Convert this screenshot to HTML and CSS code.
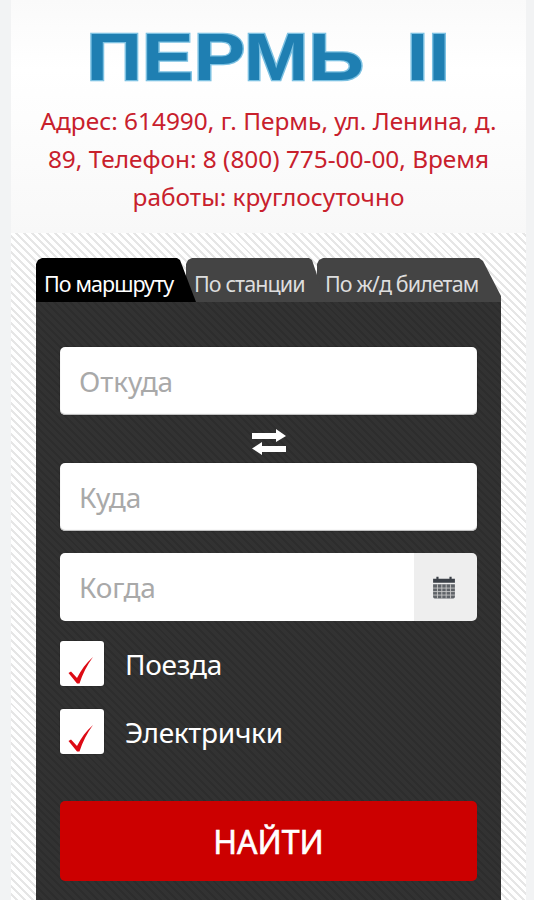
FILE: index.html
```html
<!DOCTYPE html>
<html lang="ru">
<head>
    <meta charset="UTF-8">
    <meta name="viewport" content="width=device-width, initial-scale=1.0">
    <title>Пермь II</title>
    <link rel="stylesheet" href="styles.css">
</head>
<body>
    <div class="container">
        <header class="station-header">
            <h1 class="logo"><span class="logo-text">ПЕРМЬ&nbsp;&nbsp;II</span></h1>
            <p class="station-info">Адрес: 614990, г. Пермь, ул. Ленина, д. 89, Телефон: 8 (800) 775-00-00, Время работы: круглосуточно</p>
        </header>

        <main class="search-area">
            <div class="tabs">
                <a class="tab tab-active">По маршруту</a>
                <a class="tab tab-middle">По станции</a>
                <a class="tab tab-last">По ж/д билетам</a>
            </div>

            <form class="search-form">
                <input class="field" type="text" placeholder="Откуда">
                <div class="swap">
                    <svg width="34" height="26" viewBox="0 0 34 26">
                        <path d="M0 4h24V0l10 7-10 6V10H0z" fill="#fff"/>
                        <path d="M34 17H10v-4L0 19.500 10 26v-3h24z" fill="#fff"/>
                    </svg>
                </div>
                <input class="field" type="text" placeholder="Куда">
                <div class="date-group">
                    <input class="field field-date" type="text" placeholder="Когда">
                    <span class="date-addon">
                        <svg width="24" height="24" viewBox="0 0 22 22">
                            <path d="M1 3.500h3V1.500h2v2h10v-2h2v2h3V7H1z" fill="#3c4148"/>
                            <path d="M1 8.500h20V20a1.500 1.500 0 0 1-1.500 1.500h-17A1.500 1.500 0 0 1 1 20z" fill="#5f6368"/>
                            <path d="M1 12h20M1 15.200h20M1 18.400h20M5 8.500v13M9 8.500v13M13 8.500v13M17 8.500v13" stroke="#c9c9c9" stroke-width="0.8"/>
                        </svg>
                    </span>
                </div>

                <label class="check-row">
                    <span class="check-box">
                        <svg width="30" height="32" viewBox="0 0 30 32">
                            <path d="M1.500 20l2.500-1.500 6 6.500C14 17 19 10 26 4c-6 8-10.500 17-13.500 26.500H10z" fill="#dd0a14"/>
                        </svg>
                    </span>
                    Поезда
                </label>
                <label class="check-row">
                    <span class="check-box">
                        <svg width="30" height="32" viewBox="0 0 30 32">
                            <path d="M1.500 20l2.500-1.500 6 6.500C14 17 19 10 26 4c-6 8-10.500 17-13.500 26.500H10z" fill="#dd0a14"/>
                        </svg>
                    </span>
                    Электрички
                </label>

                <button type="button" class="search-button">НАЙТИ</button>
            </form>
        </main>
    </div>
</body>
</html>
```

FILE: styles.css
```css
/* Page */
body {
    margin: 0;
    height: 900px;
    overflow: hidden;
    background-color: #f2f3f4;
    font-family: "Noto Sans", Arial, sans-serif;
}
.container {
    width: 515px;
    margin-left: 11px;
}

/* Header */
.station-header {
    height: 233px;
    box-sizing: border-box;
    padding-top: 33px;
    background: linear-gradient(#fafafa, #ffffff 30%, #fbfbfb 70%, #f8f8f8);
    text-align: center;
}
.logo {
    margin: 0;
    height: 49px;
    line-height: 49px;
    font-size: 66px;
    font-weight: bold;
    font-family: "Liberation Sans", Arial, sans-serif;
    color: #1f7fb2;
}
.logo-text {
    display: inline-block;
    -webkit-text-stroke: 2.5px #7cc1e2;
    paint-order: stroke fill;
    white-space: nowrap;
    transform: scaleX(1.17);
}
.station-info {
    margin: 20px 20px 0;
    font-size: 24.4px;
    line-height: 38px;
    color: #c8202c;
}

/* Striped area */
.search-area {
    height: 667px;
    box-sizing: border-box;
    padding: 25px 25px 0;
    background: repeating-linear-gradient(45deg, #ffffff 0, #ffffff 3.5px, #e6e6e6 3.5px, #e6e6e6 5.6px);
}

/* Tabs */
.tabs {
    display: flex;
    height: 44px;
}
.tab {
    position: relative;
    line-height: 51px;
    height: 44px;
    overflow: hidden;
    box-sizing: border-box;
    font-size: 21.5px;
    letter-spacing: -0.9px;
    color: #dddddd;
    background-color: #444444;
    white-space: nowrap;
}
.tab-active {
    z-index: 3;
    width: 160px;
    padding-left: 8px;
    color: #ffffff;
    background-color: #000000;
    clip-path: polygon(0 6px, 2px 2px, 6px 0, 141px 0, 144px 2px, 160px 44px, 0 44px);
}
.tab-middle {
    z-index: 2;
    width: 140px;
    margin-left: -10px;
    padding-left: 8px;
    clip-path: polygon(0 6px, 2px 2px, 6px 0, 123px 0, 126px 2px, 140px 44px, 0 44px);
}
.tab-last {
    z-index: 1;
    width: 184px;
    margin-left: -9px;
    padding-left: 8px;
    clip-path: polygon(0 6px, 2px 2px, 6px 0, 162px 0, 166px 3px, 184px 38px, 184px 44px, 0 44px);
}

/* Form */
.search-form {
    height: 598px;
    box-sizing: border-box;
    padding: 45px 24px 0;
    background: repeating-linear-gradient(45deg, #323232 0, #323232 3.5px, #2d2d2d 3.5px, #2d2d2d 5.6px);
}
.field {
    display: block;
    width: 100%;
    height: 68px;
    box-sizing: border-box;
    padding: 0 19px;
    border: none;
    border-radius: 5px;
    background-color: #ffffff;
    box-shadow: 0 -1px 1px #bbbbbb inset, 0 0 1px #000000;
    font-family: "Noto Sans", Arial, sans-serif;
    font-size: 28px;
    letter-spacing: -0.1px;
    outline: none;
}
.field::placeholder {
    color: #a9a9a9;
    opacity: 1;
}
.swap {
    display: flex;
    justify-content: center;
    align-items: center;
    height: 48px;
    box-sizing: border-box;
    padding-top: 6px;
}
.date-group {
    display: flex;
    margin-top: 22px;
    height: 68px;
    border-radius: 5px;
    overflow: hidden;
}
.field-date {
    flex: 1;
    min-width: 0;
    border-radius: 0;
    box-shadow: none;
}
.date-addon {
    width: 63px;
    box-sizing: border-box;
    padding-right: 3px;
    display: flex;
    justify-content: center;
    align-items: center;
    background-color: #eeeeee;
}

/* Checkboxes */
.check-row {
    display: flex;
    align-items: center;
    gap: 21px;
    margin-top: 20px;
    height: 45px;
    font-size: 28px;
    letter-spacing: -0.3px;
    color: #ffffff;
}
.check-row + .check-row {
    margin-top: 23px;
}
.check-box {
    width: 44px;
    height: 45px;
    flex: none;
    display: flex;
    justify-content: center;
    align-items: flex-end;
    box-sizing: border-box;
    padding-bottom: 1px;
    border-radius: 3px;
    background-color: #ffffff;
    box-shadow: 0 0 1px #000000;
}

/* Button */
.search-button {
    display: block;
    width: 100%;
    height: 80px;
    margin-top: 47px;
    border: none;
    border-radius: 5px;
    background-color: #cc0000;
    color: #ffffff;
    font-family: "Noto Sans", Arial, sans-serif;
    font-size: 32px;
    font-weight: 400;
    -webkit-text-stroke: 0.6px #ffffff;
}
```
